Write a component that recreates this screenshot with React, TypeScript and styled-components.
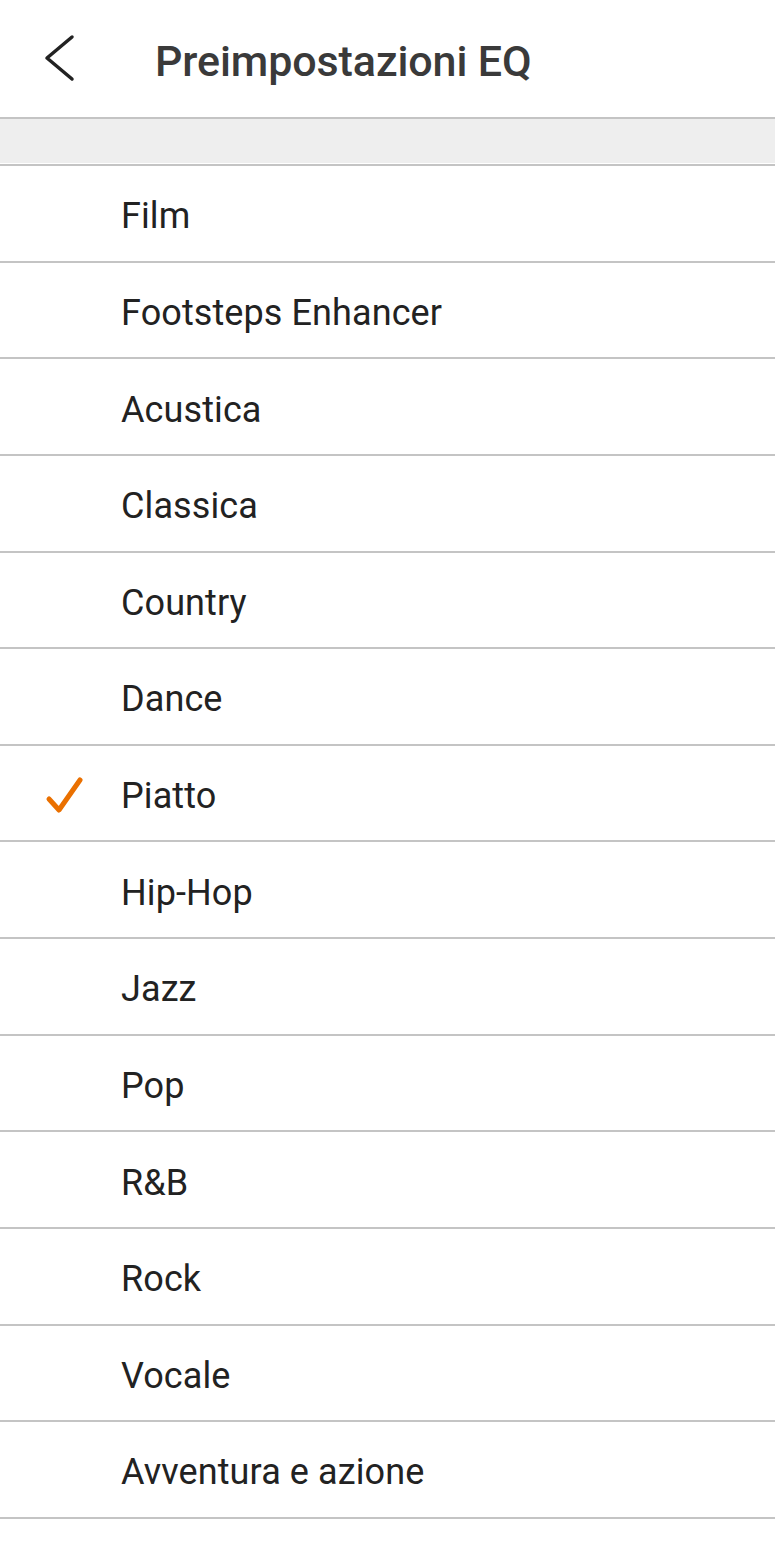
import React from 'react';
import styled, { createGlobalStyle } from 'styled-components';

const GlobalStyle = createGlobalStyle`
  html, body {
    margin: 0;
    padding: 0;
    background: #ffffff;
  }
  body {
    font-family: Roboto, "Liberation Sans", sans-serif;
    -webkit-font-smoothing: antialiased;
  }
`;

const Screen = styled.div`
  width: 775px;
  min-height: 1554px;
  background: #ffffff;
  display: flex;
  flex-direction: column;
`;

const Header = styled.header`
  height: 119px;
  box-sizing: border-box;
  border-bottom: 2px solid #c4c4c4;
  display: flex;
  align-items: center;
`;

const BackButton = styled.button`
  width: 155px;
  height: 100%;
  padding: 0 0 2px 44px;
  border: none;
  background: transparent;
  display: flex;
  align-items: center;
  cursor: pointer;
`;

const Title = styled.h1`
  margin: 4px 0 0 0;
  font-size: 43px;
  font-weight: 500;
  color: #3a3a3a;
  letter-spacing: -0.1px;
`;

const Band = styled.div`
  height: 44px;
  background: #eeeeee;
  border-bottom: 1px solid #ffffff;
`;

const List = styled.ul`
  margin: 0;
  padding: 0;
  list-style: none;
  border-top: 2px solid #c4c4c4;
`;

const Row = styled.li`
  height: 96.64px;
  box-sizing: border-box;
  border-bottom: 2px solid #c4c4c4;
  display: flex;
  align-items: center;
  padding-top: 6px;
`;

const CheckSlot = styled.div`
  width: 121px;
  display: flex;
  align-items: center;
  padding-left: 45px;
  box-sizing: border-box;
`;

const Label = styled.span`
  font-size: 36px;
  color: #222222;
  letter-spacing: 0.1px;
`;

const presets = [
  'Film',
  'Footsteps Enhancer',
  'Acustica',
  'Classica',
  'Country',
  'Dance',
  'Piatto',
  'Hip-Hop',
  'Jazz',
  'Pop',
  'R&B',
  'Rock',
  'Vocale',
  'Avventura e azione',
];

const selected = 'Piatto';

function Chevron() {
  return (
    <svg width="32" height="48" viewBox="0 0 32 48" fill="none">
      <path d="M28 3 L3 24 L28 45" stroke="#222" strokeWidth="3.5" strokeLinecap="round" strokeLinejoin="round" />
    </svg>
  );
}

function Check() {
  return (
    <svg width="40" height="40" viewBox="0 0 40 40" fill="none">
      <path d="M4 23 L14 34 L35 4" stroke="#ea7000" strokeWidth="5" strokeLinecap="round" strokeLinejoin="round" />
    </svg>
  );
}

export default function App() {
  return (
    <>
      <GlobalStyle />
      <Screen>
        <Header>
          <BackButton aria-label="Indietro">
            <Chevron />
          </BackButton>
          <Title>Preimpostazioni EQ</Title>
        </Header>
        <Band />
        <List>
          {presets.map((p) => (
            <Row key={p}>
              <CheckSlot>{p === selected && <Check />}</CheckSlot>
              <Label>{p}</Label>
            </Row>
          ))}
        </List>
      </Screen>
    </>
  );
}
